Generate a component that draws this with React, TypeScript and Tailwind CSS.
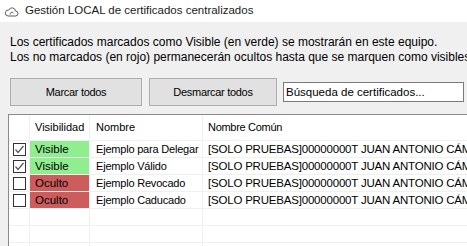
import React from "react";

const rows = [
  { checked: true, visible: true, nombre: "Ejemplo para Delegar" },
  { checked: true, visible: true, nombre: "Ejemplo Válido" },
  { checked: false, visible: false, nombre: "Ejemplo Revocado" },
  { checked: false, visible: false, nombre: "Ejemplo Caducado" },
];

const comun = "[SOLO PRUEBAS]00000000T JUAN ANTONIO CÁMARA ESPEJO";

function CheckBox({ checked }: { checked: boolean }) {
  return (
    <div className="w-[13px] h-[13px] border border-[#333333] bg-white flex items-center justify-center">
      {checked && (
        <svg width="11" height="11" viewBox="0 0 11 11">
          <polyline points="1.5,5.5 4,8.5 9.5,2" fill="none" stroke="#555555" strokeWidth="1.2" />
        </svg>
      )}
    </div>
  );
}

function CloudIcon() {
  return (
    <svg width="15" height="11" viewBox="0 0 15 11" className="shrink-0">
      <path
        d="M4 10 H11.5 A2.5 2.5 0 0 0 11.5 5 A3.5 3.5 0 0 0 4.8 4 A3 3 0 0 0 4 10 Z"
        fill="none"
        stroke="#5a5a5a"
        strokeWidth="1"
      />
      <path d="M6 8.5 A2 2 0 0 1 9.5 7" fill="none" stroke="#5a5a5a" strokeWidth="1" />
    </svg>
  );
}

export default function App() {
  return (
    <div
      className="w-[467px] h-[246px] overflow-hidden bg-[#f0f0f0] text-black flex flex-col"
      style={{ fontFamily: '"Liberation Sans", Arial, sans-serif' }}
    >
      {/* title bar */}
      <div className="h-[22px] bg-white flex items-center pl-[4px] gap-[6px] shrink-0">
        <CloudIcon />
        <span className="text-[11.5px] text-[#1a1a1a] whitespace-nowrap">
          Gestión LOCAL de certificados centralizados
        </span>
      </div>

      <div className="flex flex-col text-[11px] leading-[15px]">
        <div className="pt-[13px] pl-[10px] whitespace-nowrap overflow-hidden text-[12px]">
          <div>Los certificados marcados como Visible (en verde) se mostrarán en este equipo.</div>
          <div>Los no marcados (en rojo) permanecerán ocultos hasta que se marquen como visibles.</div>
        </div>

        <div className="flex items-center mt-[13px] pl-[10px] h-[28px]">
          <button className="w-[132px] h-[28px] bg-[#e1e1e1] border border-[#adadad] tracking-[-0.3px]">
            Marcar todos
          </button>
          <button className="w-[128px] h-[28px] ml-[7px] bg-[#e1e1e1] border border-[#adadad] tracking-[-0.3px]">
            Desmarcar todos
          </button>
          <div className="w-[181px] h-[20px] ml-[6px] bg-white border border-[#7a7a7a] flex items-center pl-[2px] whitespace-nowrap overflow-hidden text-[11.5px]">
            Búsqueda de certificados...
          </div>
        </div>

        {/* grid */}
        <div className="mt-[8px] ml-[8px] w-[520px] bg-white border-l border-t border-[#8a8a8a] h-[200px]">
          <div className="grid grid-cols-[21px_60px_113px_1fr] h-[26px] border-b border-[#f0f0f0]">
            <div className="border-r border-[#f0f0f0]" />
            <div className="border-r border-[#f0f0f0] flex items-center pl-[5px]">Visibilidad</div>
            <div className="border-r border-[#f0f0f0] flex items-center pl-[6px]">Nombre</div>
            <div className="flex items-center pl-[5px] tracking-[-0.3px]">Nombre Común</div>
          </div>
          {rows.map((r, i) => (
            <div
              key={i}
              className="grid grid-cols-[21px_60px_113px_1fr] h-[17px] border-b border-[#f0f0f0]"
            >
              <div className="border-r border-[#f0f0f0] flex items-center pl-[4px]">
                <CheckBox checked={r.checked} />
              </div>
              <div
                className={
                  "border-r border-[#f0f0f0] flex items-center pl-[5px] text-[11.5px] " +
                  (r.visible ? "bg-[#90ee90]" : "bg-[#cd5c5c]")
                }
              >
                {r.visible ? "Visible" : "Oculto"}
              </div>
              <div className="border-r border-[#f0f0f0] flex items-center pl-[6px] whitespace-nowrap text-[11px] tracking-[-0.2px]">
                {r.nombre}
              </div>
              <div className="flex items-center pl-[5px] whitespace-nowrap overflow-hidden text-[11.5px] tracking-[-0.2px]">
                {comun}
              </div>
            </div>
          ))}
          {[0, 1, 2].map((i) => (
            <div
              key={"e" + i}
              className="grid grid-cols-[21px_60px_113px_1fr] h-[17px] border-b border-[#f0f0f0]"
            >
              <div className="border-r border-[#f0f0f0]" />
              <div className="border-r border-[#f0f0f0]" />
              <div className="border-r border-[#f0f0f0]" />
              <div />
            </div>
          ))}
        </div>
      </div>
    </div>
  );
}
